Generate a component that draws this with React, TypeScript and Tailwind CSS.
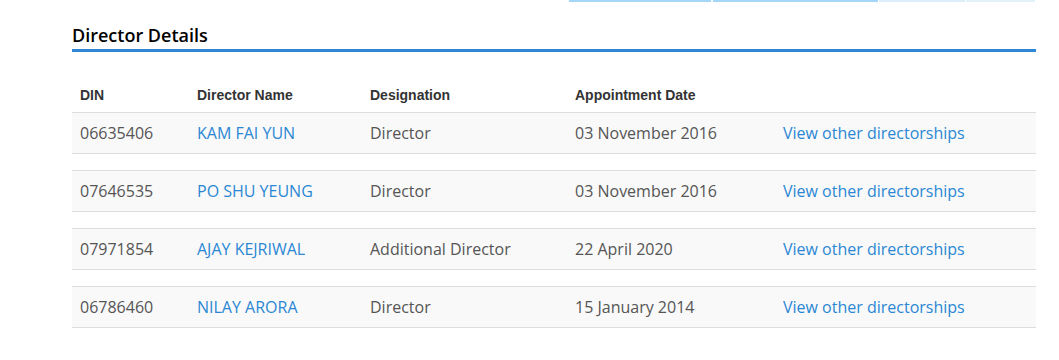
import { FC } from "react";

interface Director {
  din: string;
  name: string;
  designation: string;
  appointed: string;
}

const directors: Director[] = [
  { din: "06635406", name: "KAM FAI YUN", designation: "Director", appointed: "03 November 2016" },
  { din: "07646535", name: "PO SHU YEUNG", designation: "Director", appointed: "03 November 2016" },
  { din: "07971854", name: "AJAY KEJRIWAL", designation: "Additional Director", appointed: "22 April 2020" },
  { din: "06786460", name: "NILAY ARORA", designation: "Director", appointed: "15 January 2014" },
];

const cols = "grid grid-cols-[117px_173px_205px_208px_261px]";

const App: FC = () => {
  return (
    <div className="min-h-screen bg-white font-['Open_Sans',sans-serif]">
      {/* leftover tab strip from the section above */}
      <div className="flex h-[2px] pl-[569px]">
        <div className="w-[142px] bg-[#a3d8fa]" />
        <div className="ml-[2px] w-[165px] bg-[#a3d8fa]" />
        <div className="ml-[1px] w-[86px] bg-[#ddeefb]" />
        <div className="ml-[1px] w-[69px] bg-[#e3f1fb]" />
      </div>

      <section className="ml-[72px] w-[964px] pt-[23px]">
        <h2 className="border-b-[3px] border-[#2f87d5] pb-[3px] text-[18px] font-semibold leading-[21px] text-black">
          Director Details
        </h2>

        <div
          className={`${cols} mt-[28px] h-[32px] items-start font-['Liberation_Sans',Arial,sans-serif] text-[14px] font-bold leading-[31px] text-[#333]`}
        >
          <div className="px-2">DIN</div>
          <div className="px-2">Director Name</div>
          <div className="px-2">Designation</div>
          <div className="px-2">Appointment Date</div>
          <div className="px-2" />
        </div>

        <div className="flex flex-col gap-[16px]">
          {directors.map((d) => (
            <div
              key={d.din}
              className={`${cols} h-[42px] items-center border-y border-[#dddddd] bg-[#f9f9f9] text-[16px] text-[#555]`}
            >
              <div className="px-2">{d.din}</div>
              <div className="px-2">
                <a href="#" className="text-[#2b87d4]">
                  {d.name}
                </a>
              </div>
              <div className="px-2">{d.designation}</div>
              <div className="px-2">{d.appointed}</div>
              <div className="px-2">
                <a href="#" className="text-[#2b87d4]">
                  View other directorships
                </a>
              </div>
            </div>
          ))}
        </div>
      </section>
    </div>
  );
};

export default App;
